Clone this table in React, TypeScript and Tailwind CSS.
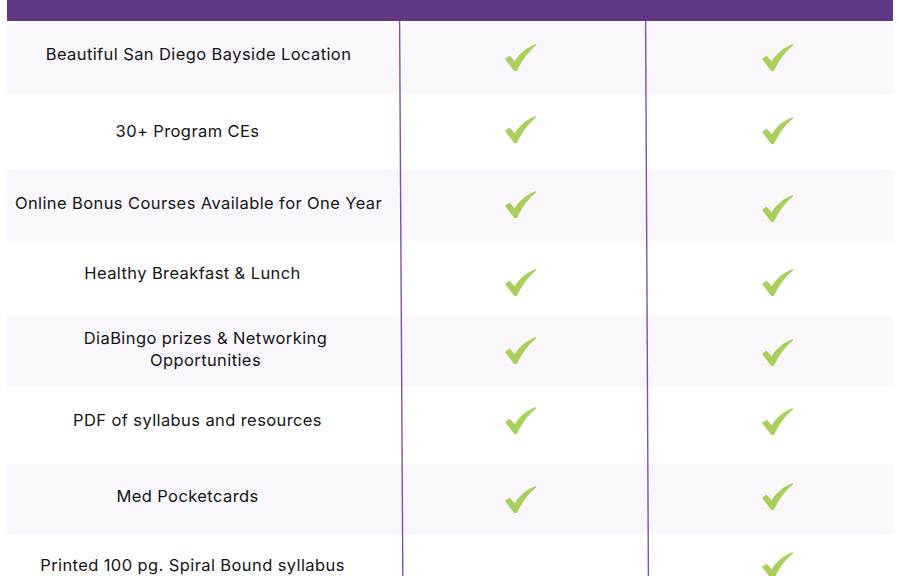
import React from "react";

type Row = {
  text: React.ReactNode;
  h: string;
  bg: string;
  textPad: string;
  c2: string | null;
  c3: string | null;
};

const rows: Row[] = [
  { text: "Beautiful San Diego Bayside Location", h: "h-[70px]", bg: "bg-[#f9f7fc]", textPad: "pr-[10px] pb-[10px]", c2: "mb-[4px]", c3: "mb-[4px]" },
  { text: "30+ Program CEs", h: "h-[76px]", bg: "bg-white", textPad: "pr-[32px] pb-[2px]", c2: "mb-[6px]", c3: "mb-[4px]" },
  { text: "Online Bonus Courses Available for One Year", h: "h-[71px]", bg: "bg-[#f9f7fc]", textPad: "pr-[10px] pb-[5px]", c2: "mb-[3px]", c3: "mt-[5px]" },
  { text: "Healthy Breakfast & Lunch", h: "h-[75px]", bg: "bg-white", textPad: "pr-[22px] pb-[11px]", c2: "mt-[7px]", c3: "mt-[7px]" },
  { text: (<>DiaBingo prizes &amp; Networking<br />Opportunities</>), h: "h-[71px]", bg: "bg-[#f9f7fc]", textPad: "pl-[4px] pb-[5px]", c2: "mb-[2px]", c3: "mt-[2px]" },
  { text: "PDF of syllabus and resources", h: "h-[77px]", bg: "bg-white", textPad: "pr-[12px] pb-[12px]", c2: "mb-[10px]", c3: "mb-[8px]" },
  { text: "Med Pocketcards", h: "h-[70px]", bg: "bg-[#f9f7fc]", textPad: "pr-[32px] pb-[6px]", c2: "mt-[1px]", c3: "mb-[5px]" },
  { text: "Printed 100 pg. Spiral Bound syllabus", h: "h-[70px]", bg: "bg-white", textPad: "pr-[22px] pb-[8px]", c2: null, c3: "mb-[8px]" },
];

function Check({ cls }: { cls: string }) {
  return (
    <svg viewBox="0 0 31 27" className={`w-[31px] h-[27px] ${cls}`}>
      <path
        d="M0 15 L4.5 11.5 L9.8 17.2 C14 10 21 3.5 31 0 L31 1.6 C24 7 17.5 15.5 12 27 L9.2 27 Z"
        fill="#a8d05a"
      />
    </svg>
  );
}

export default function App() {
  return (
    <div className="relative w-[900px] h-[576px] overflow-hidden bg-white" style={{ fontFamily: "Inter, 'Noto Sans', sans-serif" }}>
      <div className="px-[7px]">
        <div className="h-[21px] bg-[#5f3785]" />
        <div className="mt-[3px] flex flex-col">
          {rows.map((r, i) => (
            <div key={i} className={`grid grid-cols-[393px_247px_246px] ${r.h} ${r.bg}`}>
              <div className={`flex items-center justify-center text-center text-[16.5px] leading-[22px] tracking-[0.4px] text-[#141414] ${r.textPad}`}>
                <span>{r.text}</span>
              </div>
              <div className="flex items-center justify-center pr-[7px]">
                {r.c2 && <Check cls={r.c2} />}
              </div>
              <div className="flex items-center justify-center pl-[14px]">
                {r.c3 && <Check cls={r.c3} />}
              </div>
            </div>
          ))}
        </div>
      </div>
      <svg className="absolute left-0 top-0 w-[900px] h-[576px] pointer-events-none" viewBox="0 0 900 576">
        <line x1="399.6" y1="21" x2="402.8" y2="576" stroke="#7c52aa" strokeWidth="1.4" />
        <line x1="645.6" y1="21" x2="648.4" y2="576" stroke="#7c52aa" strokeWidth="1.4" />
      </svg>
    </div>
  );
}
